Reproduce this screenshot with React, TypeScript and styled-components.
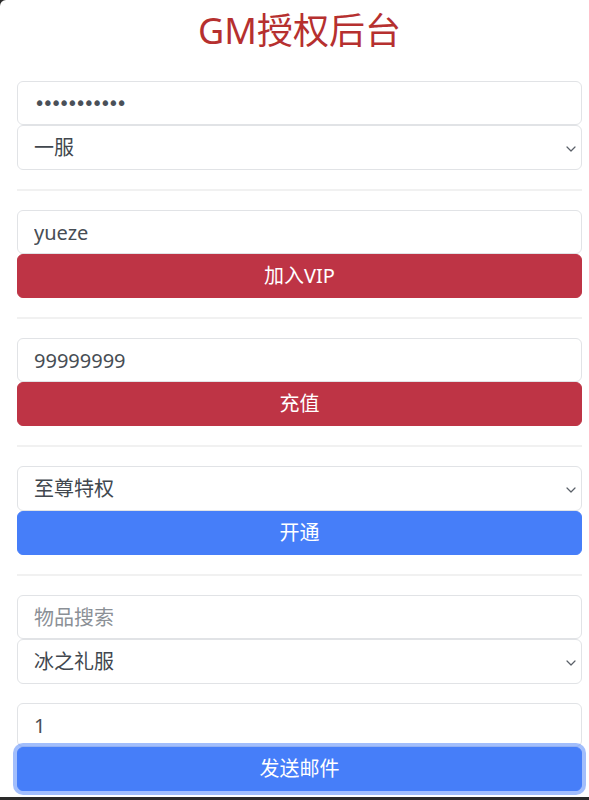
import styled, { createGlobalStyle } from "styled-components";

const GlobalStyle = createGlobalStyle`
  html, body {
    margin: 0;
    padding: 0;
    background: #2a2a2a;
  }
  * {
    box-sizing: border-box;
  }
`;

const Page = styled.div`
  height: 797px;
  background: #ffffff;
  border-top-left-radius: 6px;
  padding: 0 7px 0 17px;
  font-family: "Noto Sans", "Noto Sans CJK SC", sans-serif;
  overflow: hidden;
`;

const Title = styled.h1`
  margin: 0;
  padding: 12px 0 31px;
  font-size: 36px;
  font-weight: 400;
  line-height: 38px;
  text-align: center;
  color: #b6302f;
`;

const Section = styled.div`
  display: flex;
  flex-direction: column;
`;

const Divider = styled.hr`
  margin: 19px 0;
  border: 0;
  height: 2px;
  background: #f1f1f1;
`;

const Spacer = styled.div`
  height: 19px;
`;

const Field = styled.input`
  display: block;
  width: 100%;
  height: 44px;
  padding: 6px 16px;
  font-family: inherit;
  font-size: 20px;
  line-height: 30px;
  color: #474d54;
  background: #ffffff;
  border: 1px solid #e1e3e6;
  border-radius: 6px;
  outline: none;
  &::placeholder {
    color: #8b9096;
  }
  &[type="password"] {
    font-family: "DejaVu Sans", sans-serif;
    font-size: 19px;
    letter-spacing: -3px;
    color: #4a5058;
  }
`;

const SelectWrap = styled.div`
  position: relative;
  height: 45px;
`;

const Select = styled.select`
  appearance: none;
  display: block;
  width: 100%;
  height: 45px;
  padding: 6px 30px 6px 16px;
  font-family: inherit;
  font-size: 20px;
  line-height: 30px;
  color: #41474e;
  background: #ffffff;
  border: 1px solid #e1e3e6;
  border-radius: 6px;
  outline: none;
`;

const Chevron = styled.svg`
  position: absolute;
  right: 6px;
  top: 50%;
  width: 10px;
  height: 6px;
  margin-top: -2px;
  pointer-events: none;
`;

const Button = styled.button<{ $tone: "red" | "blue"; $focused?: boolean }>`
  display: block;
  width: 100%;
  height: 44px;
  padding: 6px 16px;
  font-family: inherit;
  font-size: 20px;
  line-height: 30px;
  color: #ffffff;
  background: ${(p) => (p.$tone === "red" ? "#be3445" : "#467ef9")};
  border: 1px solid ${(p) => (p.$tone === "red" ? "#be3445" : "#467ef9")};
  border-radius: 6px;
  cursor: pointer;
  box-shadow: ${(p) =>
    p.$focused ? "0 0 0 4px rgba(70, 126, 249, 0.5)" : "none"};
  position: relative;
`;

const Dropdown = (props: { value: string; options: string[] }) => (
  <SelectWrap>
    <Select defaultValue={props.value}>
      {props.options.map((o) => (
        <option key={o}>{o}</option>
      ))}
    </Select>
    <Chevron viewBox="0 0 10 6">
      <path
        d="M1 1l4 4 4-4"
        fill="none"
        stroke="#5a6068"
        strokeWidth="1.2"
        strokeLinecap="round"
        strokeLinejoin="round"
      />
    </Chevron>
  </SelectWrap>
);

const App = () => {
  return (
    <>
      <GlobalStyle />
      <Page>
        <Title>GM授权后台</Title>
        <Section>
          <Field type="password" defaultValue="12345678901" />
          <Dropdown value="一服" options={["一服", "二服", "三服"]} />
        </Section>
        <Divider />
        <Section>
          <Field type="text" defaultValue="yueze" />
          <Button $tone="red">加入VIP</Button>
        </Section>
        <Divider />
        <Section>
          <Field type="text" defaultValue="99999999" />
          <Button $tone="red">充值</Button>
        </Section>
        <Divider />
        <Section>
          <Dropdown value="至尊特权" options={["至尊特权", "普通特权"]} />
          <Button $tone="blue">开通</Button>
        </Section>
        <Divider />
        <Section>
          <Field type="text" placeholder="物品搜索" />
          <Dropdown value="冰之礼服" options={["冰之礼服", "火之礼服"]} />
          <Spacer />
          <Field type="text" defaultValue="1" />
          <Button $tone="blue" $focused>
            发送邮件
          </Button>
        </Section>
      </Page>
    </>
  );
};

export default App;
